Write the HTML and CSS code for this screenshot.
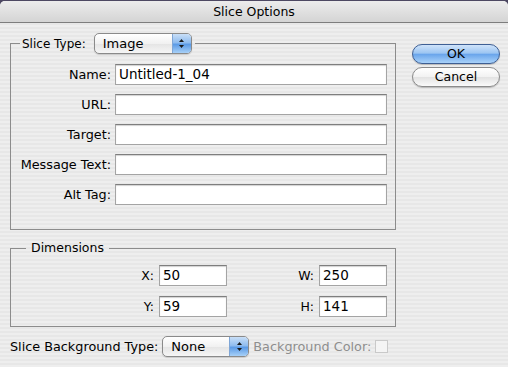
FILE: index.html
```html
<!DOCTYPE html>
<html lang="en">
  <head>
    <meta charset="UTF-8" />
    <title>Slice Options</title>
    <link rel="stylesheet" href="styles.css">
  </head>
  <body>
    <div class="window">
      <div class="titlebar">Slice Options</div>
      <div class="content">
        <div class="main">
          <fieldset class="group slice">
            <legend>
              <span class="legend-label">Slice Type:</span>
              <span class="popup type-popup">
                <span class="popup-text">Image</span>
                <span class="popup-arrows">
                  <svg width="7" height="11" viewBox="0 0 7 11"><path d="M3.5 1 L6 4 L1 4 Z" fill="#1a1a1a"/><path d="M1 7 L6 7 L3.5 10 Z" fill="#1a1a1a"/></svg>
                </span>
              </span>
            </legend>
            <div class="row">
              <label class="label">Name:</label>
              <div class="field">Untitled-1_04</div>
            </div>
            <div class="row">
              <label class="label">URL:</label>
              <div class="field"></div>
            </div>
            <div class="row">
              <label class="label">Target:</label>
              <div class="field"></div>
            </div>
            <div class="row">
              <label class="label">Message Text:</label>
              <div class="field"></div>
            </div>
            <div class="row">
              <label class="label">Alt Tag:</label>
              <div class="field"></div>
            </div>
          </fieldset>

          <fieldset class="group dims">
            <legend class="dims-legend">Dimensions</legend>
            <div class="dim-grid">
              <label class="dim-label">X:</label>
              <div class="field">50</div>
              <label class="dim-label">W:</label>
              <div class="field">250</div>
              <label class="dim-label">Y:</label>
              <div class="field">59</div>
              <label class="dim-label">H:</label>
              <div class="field">141</div>
            </div>
          </fieldset>

          <div class="bg-row">
            <span class="bg-label">Slice Background Type:</span>
            <span class="popup bg-popup">
              <span class="popup-text">None</span>
              <span class="popup-arrows">
                <svg width="7" height="11" viewBox="0 0 7 11"><path d="M3.5 1 L6 4 L1 4 Z" fill="#1a1a1a"/><path d="M1 7 L6 7 L3.5 10 Z" fill="#1a1a1a"/></svg>
              </span>
            </span>
            <span class="disabled-label">Background Color:</span>
            <span class="swatch"></span>
          </div>
        </div>

        <div class="buttons">
          <div class="btn default">OK</div>
          <div class="btn">Cancel</div>
        </div>
      </div>
    </div>
  </body>
</html>
```

FILE: styles.css
```css
html,
body {
  margin: 0;
  height: 100%;
}

body {
  background-color: #4d4862;
  font-family: "DejaVu Sans", sans-serif;
  font-size: 12.8px;
  color: #000;
}

.window {
  width: 508px;
  height: 367px;
  margin-top: 1px;
  border-radius: 5px 5px 0 0;
  overflow: hidden;
  background: repeating-linear-gradient(#eeeeee 0 2px, #e7e7e7 2px 4px);
}

.titlebar {
  height: 21px;
  line-height: 21px;
  text-align: center;
  font-size: 12.5px;
  background: linear-gradient(#ececec, #d4d4d4);
  border-bottom: 1px solid #7d7d7d;
}

.content {
  display: flex;
  padding: 10px 8px 0 10px;
}

.main {
  width: 386px;
}

.group {
  margin: 0;
  padding: 0 8px 0 0;
  border: 1px solid #8c8c8c;
}

.slice {
  padding-top: 10px;
  padding-bottom: 24px;
}

.slice legend {
  margin-left: 9px;
  padding: 0 3px 0 2px;
  display: flex;
  align-items: center;
  height: 21px;
}

.legend-label {
  margin-right: 8px;
  font-size: 12px;
}

.row {
  display: flex;
  align-items: center;
  height: 21px;
  margin-bottom: 9px;
}

.row:last-child {
  margin-bottom: 0;
}

.label {
  width: 104px;
  padding-right: 4px;
  text-align: right;
  box-sizing: border-box;
}

.field {
  flex: 1;
  height: 21px;
  box-sizing: border-box;
  background: #fff;
  border: 1px solid #a4a4a4;
  border-top-color: #7e7e7e;
  box-shadow: inset 0 1px 1px rgba(0, 0, 0, 0.18);
  padding: 0 3px;
  line-height: 19px;
  font-size: 13.5px;
}

.popup {
  display: inline-flex;
  align-items: stretch;
  height: 21px;
  box-sizing: border-box;
  border: 1px solid #8a8a8a;
  border-radius: 5px;
  overflow: hidden;
  background: linear-gradient(#ffffff, #f1f1f1 50%, #e4e4e4 51%, #f6f6f6);
  box-shadow: 0 1px 1px rgba(0, 0, 0, 0.15);
}

.popup-text {
  flex: 1;
  padding-left: 8px;
  line-height: 19px;
  font-size: 13px;
}

.popup-arrows {
  width: 18px;
  display: flex;
  align-items: center;
  justify-content: center;
  border-left: 1px solid #7fa6d6;
  background: linear-gradient(#c9dff7, #8fbcef 45%, #5c9be6 55%, #a7d0f7);
}

.type-popup {
  width: 98px;
}

.dims {
  margin-top: 10px;
  padding-top: 9px;
  padding-bottom: 9px;
}

.dims-legend {
  margin-left: 15px;
  padding: 0 5px;
  line-height: 16px;
  font-size: 12.5px;
}

.dim-grid {
  display: grid;
  grid-template-columns: 1fr 68px 92px 68px;
  row-gap: 10px;
  align-items: center;
}

.dim-label {
  text-align: right;
  padding-right: 5px;
  font-size: 12.5px;
}

.bg-row {
  display: flex;
  align-items: center;
  margin-top: 9px;
  height: 21px;
}

.bg-label {
  margin-right: 4px;
}

.bg-popup {
  width: 87px;
}

.disabled-label {
  margin-left: 4px;
  color: #8e8e8e;
}

.swatch {
  width: 13px;
  height: 13px;
  margin-left: 4px;
  box-sizing: border-box;
  border: 1px solid #c9c9c9;
  background: #f4f4f4;
}

.buttons {
  margin-left: 16px;
  padding-top: 11px;
  display: flex;
  flex-direction: column;
  gap: 3px;
}

.btn {
  width: 88px;
  height: 20px;
  box-sizing: border-box;
  border: 1px solid #8b8b8b;
  border-radius: 10px;
  text-align: center;
  line-height: 18px;
  font-size: 12.5px;
  background: linear-gradient(#ffffff, #f2f2f2 50%, #e2e2e2 51%, #fafafa);
  box-shadow: 0 1px 1px rgba(0, 0, 0, 0.2);
}

.btn.default {
  border-color: #3e5f94;
  background: linear-gradient(#cfe3fa, #9cc5f2 45%, #6aa5eb 52%, #a9d2fa);
}
```
